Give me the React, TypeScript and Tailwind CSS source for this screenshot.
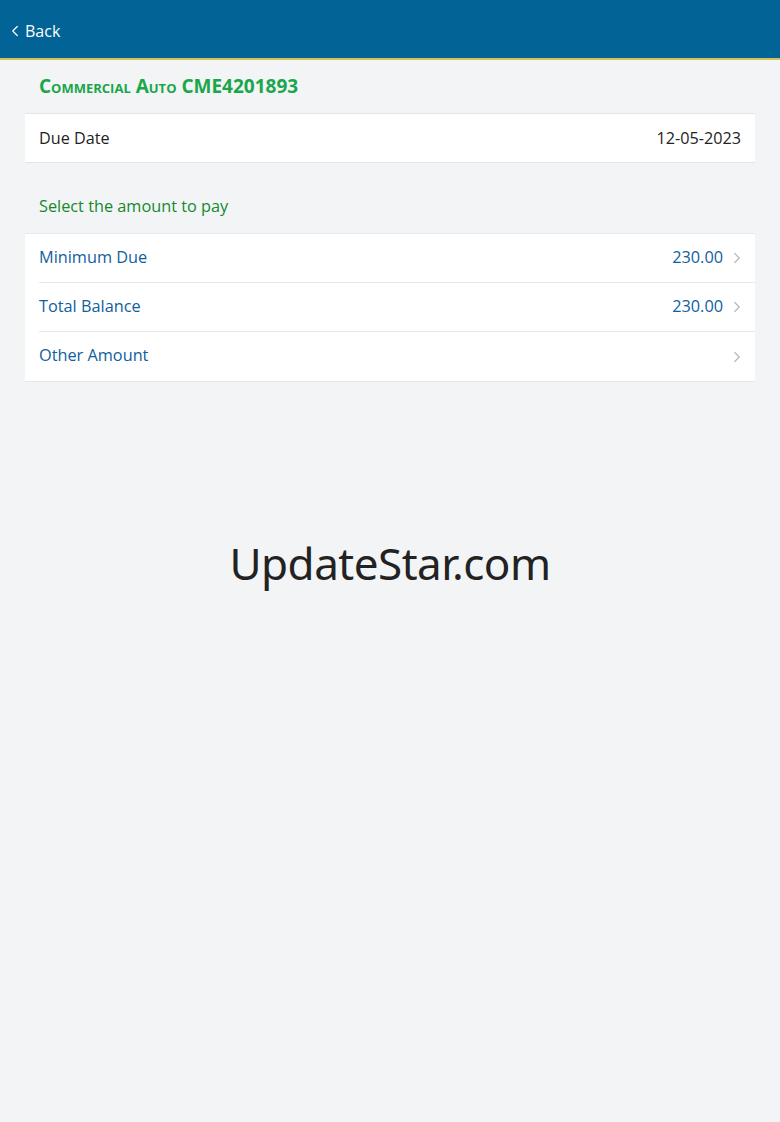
import { ChevronLeft, ChevronRight } from "lucide-react";

const rows = [
  { label: "Minimum Due", value: "230.00" },
  { label: "Total Balance", value: "230.00" },
  { label: "Other Amount", value: "" },
];

export default function App() {
  return (
    <div className="min-h-[1122px] bg-[#f3f4f6] font-['Open_Sans',sans-serif] text-[16px]">
      {/* header */}
      <div className="h-[58px] bg-[#016396] flex items-center pt-[3px] pl-[6px] text-white">
        <ChevronLeft size={18} strokeWidth={1.6} className="mr-[1px]" />
        <span className="text-[16px]">Back</span>
      </div>
      <div className="h-[2px] bg-[#d6c254]" />

      <div className="px-[25px]">
        <div className="h-[53px] flex items-center pl-[14px] text-[#1aa64a] font-bold text-[19px] [font-variant:small-caps]">
          Commercial Auto CME4201893
        </div>

        <div className="bg-white border-y border-[#e3e5e8] h-[50px] flex items-center justify-between px-[14px] text-[#222]">
          <span className="text-[16.2px]">Due Date</span>
          <span className="text-[16.2px]">12-05-2023</span>
        </div>

        <div className="h-[70px] flex items-end pb-[15px] pl-[14px] text-[#138a2e] text-[16.3px]">
          Select the amount to pay
        </div>

        <div className="bg-white border-y border-[#e6e8eb]">
          {rows.map((r, i) => (
            <div key={r.label} className="pl-[14px]">
              <div
                className={
                  "h-[49px] flex items-center justify-between pr-[9px] pb-[2px] " +
                  (i < rows.length - 1 ? "border-b border-[#e6e8eb]" : "")
                }
              >
                <span className="text-[#10609e] text-[16.3px]">{r.label}</span>
                <span className="flex items-center gap-[5px] text-[#10609e] text-[16.3px]">
                  {r.value}
                  <ChevronRight size={18} strokeWidth={1.6} className="text-[#b5b8bc] mt-[2px]" />
                </span>
              </div>
            </div>
          ))}
        </div>
      </div>

      {/* watermark */}
      <div className="mt-[148px] text-center text-[44px] tracking-[-0.5px] text-[#222] font-['Noto_Sans',sans-serif]">
        UpdateStar.com
      </div>
    </div>
  );
}
